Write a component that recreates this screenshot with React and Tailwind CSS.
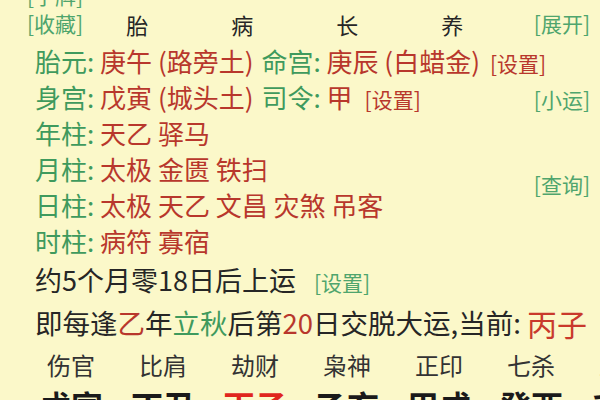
import React from 'react'

const G = ({ children }) => <span className="text-[#3f9a5d]">{children}</span>
const R = ({ children }) => <span className="text-[#b8372c]">{children}</span>
const Btn = ({ children, red }) => (
  <span className={`text-[21px] ${red ? 'text-[#b8372c]' : 'text-[#4fa56d]'}`}>[{children}]</span>
)

const gods = ['伤官', '比肩', '劫财', '枭神', '正印', '七杀', '正财']
const pillars = ['戊寅', '丁丑', '丙子', '乙亥', '甲戌', '癸酉', '壬申']

const App = () => {
  return (
    <div
      className="w-[600px] h-[400px] overflow-hidden bg-[#fbf8c9] text-[#262626]"
      style={{ fontFamily: '"Noto Sans CJK SC", "Noto Sans", sans-serif' }}
    >
      <div className="h-[28px] mt-[-18px] flex items-center pl-[27px]">
        <Btn>字牌</Btn>
      </div>

      <div className="h-[28px] flex items-center pl-[27px] pr-[10px]">
        <Btn>收藏</Btn>
        <div className="flex text-[22px] ml-[43px]">
          <span className="w-[105px]">胎</span>
          <span className="w-[105px]">病</span>
          <span className="w-[105px]">长</span>
          <span className="w-[88px]">养</span>
        </div>
        <span className="ml-auto"><Btn>展开</Btn></span>
      </div>

      <div className="text-[26px] pl-[35px] pr-[10px]">
        <div className="h-[36px] mt-[4px] flex items-center whitespace-pre">
          <G>胎元: </G>
          <R>庚午 (路旁土)</R>
          <span className="ml-[8px]"><G>命宫: </G></span>
          <R>庚辰 (白蜡金)</R>
          <span className="ml-[10px]"><Btn red>设置</Btn></span>
        </div>
        <div className="h-[36px] flex items-center whitespace-pre">
          <G>身宫: </G>
          <R>戊寅 (城头土)</R>
          <span className="ml-[8px]"><G>司令: </G></span>
          <R>甲</R>
          <span className="ml-[12px]"><Btn red>设置</Btn></span>
          <span className="ml-auto"><Btn>小运</Btn></span>
        </div>
        <div className="h-[36px] flex items-center whitespace-pre">
          <G>年柱: </G>
          <R>天乙 驿马</R>
        </div>
        <div className="flex">
          <div className="flex flex-col">
            <div className="h-[36px] flex items-center whitespace-pre">
              <G>月柱: </G>
              <R>太极 金匮 铁扫</R>
            </div>
            <div className="h-[36px] flex items-center whitespace-pre">
              <G>日柱: </G>
              <R>太极 天乙 文昌 灾煞 吊客</R>
            </div>
          </div>
          <div className="ml-auto flex items-center pb-[2px]">
            <Btn>查询</Btn>
          </div>
        </div>
        <div className="h-[36px] flex items-center whitespace-pre">
          <G>时柱: </G>
          <R>病符 寡宿</R>
        </div>
      </div>

      <div className="text-[27px] pl-[35px]">
        <div className="h-[44px] flex items-center">
          <span>约5个月零18日后上运</span>
          <span className="ml-[18px]"><Btn>设置</Btn></span>
        </div>
        <div className="h-[42px] flex items-center whitespace-pre text-[27.5px]">
          <span>即每逢</span>
          <R>乙</R>
          <span>年</span>
          <G>立秋</G>
          <span>后第</span>
          <R>20</R>
          <span>日交脱大运,当前: </span>
          <span className="text-[30px] text-[#c9392c]">丙子</span>
        </div>
      </div>

      <div className="grid grid-cols-[repeat(7,92px)] pl-[25px] h-[42px] items-center text-[24px] text-[#333]">
        {gods.map((g) => (
          <span key={g} className="text-center whitespace-nowrap">{g}</span>
        ))}
      </div>
      <div className="grid grid-cols-[repeat(7,92px)] pl-[25px] text-[32px] font-bold leading-[40px] mt-[-1px]">
        {pillars.map((p) => (
          <span key={p} className={`text-center whitespace-nowrap ${p === '丙子' ? 'text-[#e0261d]' : 'text-[#1a1a1a]'}`}>
            {p}
          </span>
        ))}
      </div>
    </div>
  )
}

export default App
